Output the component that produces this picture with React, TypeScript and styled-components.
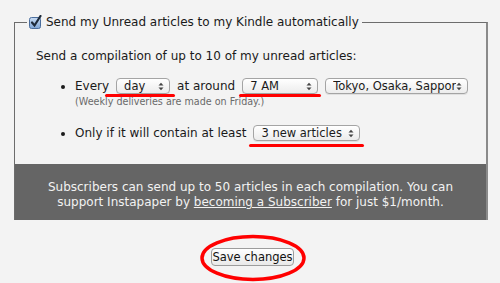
import React from "react";
import styled, { createGlobalStyle } from "styled-components";

const GlobalStyle = createGlobalStyle`
  html, body {
    margin: 0;
    padding: 0;
    background: #f3f3f3;
  }
  body {
    font-family: "DejaVu Sans", "Liberation Sans", sans-serif;
    font-size: 12px;
    color: #1a1a1a;
  }
`;

const Page = styled.div`
  width: 500px;
  height: 283px;
  padding: 14px 12px 0 14px;
  box-sizing: border-box;
  overflow: hidden;
`;

const Fieldset = styled.fieldset`
  margin: 0;
  padding: 0;
  min-width: 0;
  border: 1px solid #6c6c6c;
  border-bottom: none;
  border-right: 2px solid #8a8a8a;
`;

const Legend = styled.legend`
  margin-left: 12px;
  padding: 0 3px 0 2px;
  display: flex;
  align-items: center;
  gap: 4px;
  font-size: 12px;
  line-height: 16px;
`;

const Intro = styled.p`
  margin: 18px 0 0 21px;
  font-size: 12px;
  line-height: 16px;
`;

const OptionList = styled.ul`
  margin: 13px 0 0 0;
  padding: 0 0 0 60px;
  list-style: disc;
`;

const Option = styled.li<{ $gap?: number }>`
  margin-top: ${(p) => p.$gap ?? 0}px;
  font-size: 12px;
  line-height: 18px;
`;

const Line = styled.div`
  display: flex;
  align-items: center;
  gap: 7px;
`;

const Note = styled.div`
  font-size: 9.6px;
  line-height: 12px;
  color: #6a6a6a;
  margin-top: 1px;
`;

const SelectWrap = styled.span`
  position: relative;
  display: inline-flex;
  flex-shrink: 0;
`;

const SelectBox = styled.span<{ $w: number }>`
  width: ${(p) => p.$w}px;
  height: 16px;
  flex-shrink: 0;
  box-sizing: border-box;
  display: flex;
  align-items: center;
  padding: 0 5px 0 7px;
  border: 1px solid #a4a4a4;
  border-radius: 4px;
  background: linear-gradient(#ffffff, #ececec);
  box-shadow: 0 1px 0 rgba(0, 0, 0, 0.08);
  font-size: 11.5px;
  line-height: 14px;
`;

const SelectLabel = styled.span`
  flex: 1;
  overflow: hidden;
  white-space: nowrap;
`;

const Marker = styled.span<{ $left: number; $right: number; $top: number }>`
  position: absolute;
  left: ${(p) => p.$left}px;
  right: ${(p) => p.$right}px;
  top: ${(p) => p.$top}px;
  height: 3px;
  background: #f00;
  border-radius: 2px;
`;

const Panel = styled.div`
  margin-top: 22px;
  background: #656565;
  color: #f2f2f2;
  text-align: center;
  font-size: 12px;
  line-height: 15px;
  padding: 16px 8px 10px;
`;

const PanelLink = styled.a`
  color: #f2f2f2;
  text-decoration: underline;
`;

const Footer = styled.div`
  display: flex;
  justify-content: center;
  padding: 28px 0 0 3px;
`;

const ButtonWrap = styled.div`
  position: relative;
`;

const SaveButton = styled.button`
  width: 83px;
  height: 18px;
  padding: 0;
  border: 1px solid #9c9c9c;
  border-radius: 4px;
  background: linear-gradient(#ffffff, #e9e9e9);
  font-family: "DejaVu Sans", sans-serif;
  font-size: 11.5px;
  color: #111;
`;

const Circle = styled.svg`
  position: absolute;
  left: -12px;
  top: -14px;
  pointer-events: none;
`;

const Arrows = () => (
  <svg width="6" height="9" viewBox="0 0 6 9">
    <path d="M0.5 3.5 L3 0.8 L5.5 3.5 Z" fill="#444" />
    <path d="M0.5 5.5 L3 8.2 L5.5 5.5 Z" fill="#444" />
  </svg>
);

const Select = ({
  label,
  width,
}: {
  label: string;
  width: number;
}) => (
  <SelectBox $w={width}>
    <SelectLabel>{label}</SelectLabel>
    <Arrows />
  </SelectBox>
);

const CheckIcon = () => (
  <svg width="13" height="14" viewBox="0 0 13 14">
    <defs>
      <linearGradient id="cb" x1="0" y1="0" x2="0" y2="1">
        <stop offset="0" stopColor="#c9dcf3" />
        <stop offset="1" stopColor="#7fa6d6" />
      </linearGradient>
    </defs>
    <rect x="0.5" y="2.5" width="11" height="11" rx="2" fill="url(#cb)" stroke="#4a6d9c" />
    <path d="M3 7.5 L5.5 10.5 L11.5 1" fill="none" stroke="#1d2a3a" strokeWidth="2.2" strokeLinecap="round" />
  </svg>
);

const App: React.FC = () => {
  return (
    <Page>
      <GlobalStyle />
      <Fieldset>
        <Legend>
          <CheckIcon />
          Send my Unread articles to my Kindle automatically
        </Legend>
        <Intro>Send a compilation of up to 10 of my unread articles:</Intro>
        <OptionList>
          <Option>
            <Line>
              Every
              <SelectWrap>
                <Select label="day" width={54} />
                <Marker $left={-11} $right={-5} $top={16} />
              </SelectWrap>
              at around
              <SelectWrap>
                <Select label="7 AM" width={76} />
                <Marker $left={-3} $right={-3} $top={16} />
              </SelectWrap>
              <Select label="Tokyo, Osaka, Sapporo" width={143} />
            </Line>
            <Note>(Weekly deliveries are made on Friday.)</Note>
          </Option>
          <Option $gap={16}>
            <Line>
              Only if it will contain at least
              <SelectWrap>
                <Select label="3 new articles" width={107} />
                <Marker $left={-4} $right={-4} $top={19} />
              </SelectWrap>
            </Line>
          </Option>
        </OptionList>
        <Panel>
          Subscribers can send up to 50 articles in each compilation. You can
          <br />
          support Instapaper by <PanelLink href="#">becoming a Subscriber</PanelLink> for just $1/month.
        </Panel>
      </Fieldset>
      <Footer>
        <ButtonWrap>
          <SaveButton>Save changes</SaveButton>
          <Circle width="108" height="48" viewBox="0 0 108 48">
            <ellipse cx="54" cy="24" rx="51" ry="21.5" fill="none" stroke="#f00" strokeWidth="3.5" />
          </Circle>
        </ButtonWrap>
      </Footer>
    </Page>
  );
};

export default App;
